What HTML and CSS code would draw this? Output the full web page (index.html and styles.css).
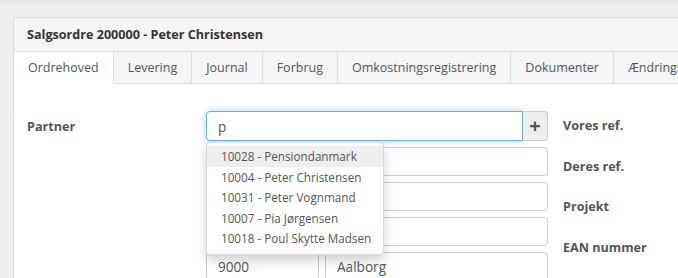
FILE: index.html
```html
<!DOCTYPE html>
<html lang="da">
	<head>
		<meta charset="UTF-8" />
		<meta name="viewport" content="width=device-width, initial-scale=1.0" />
		<link rel="stylesheet" href="styles.css">
		<title>Salgsordre 200000</title>
	</head>
	<body>
		<div class="page">
			<div class="panel">
				<div class="panel-heading">Salgsordre 200000 - Peter Christensen</div>

				<ul class="tabs">
					<li class="tab active">Ordrehoved</li>
					<li class="tab">Levering</li>
					<li class="tab">Journal</li>
					<li class="tab">Forbrug</li>
					<li class="tab">Omkostningsregistrering</li>
					<li class="tab">Dokumenter</li>
					<li class="tab">Ændringslog</li>
				</ul>

				<div class="panel-body">
					<div class="col-label">
						<label class="label">Partner</label>
					</div>

					<div class="col-fields">
						<div class="input-group">
							<input class="input focus" type="text" value="p" />
							<span class="addon">+</span>
						</div>
						<input class="input" type="text" />
						<input class="input" type="text" />
						<input class="input" type="text" />
						<div class="split">
							<input class="input zip" type="text" value="9000" />
							<input class="input" type="text" value="Aalborg" />
						</div>

						<!-- autocomplete list for the partner field -->
						<ul class="dropdown">
							<li class="item hover">10028 - Pensiondanmark</li>
							<li class="item">10004 - Peter Christensen</li>
							<li class="item">10031 - Peter Vognmand</li>
							<li class="item">10007 - Pia Jørgensen</li>
							<li class="item">10018 - Poul Skytte Madsen</li>
						</ul>
					</div>

					<div class="col-right">
						<label class="label">Vores ref.</label>
						<label class="label">Deres ref.</label>
						<label class="label">Projekt</label>
						<label class="label">EAN nummer</label>
					</div>
				</div>
			</div>
		</div>
	</body>
</html>
```

FILE: styles.css
```css
* {
	padding: 0;
	margin: 0;
	box-sizing: border-box;
	font-family: 'Open Sans', Arial, sans-serif;
}

body {
	background: linear-gradient(#e6e6e6, #efefef 5px, #efefef);
	color: #555;
	overflow: hidden;
}

.page {
	padding: 17px 0 0 13px;
}

.panel {
	width: 720px;
	background-color: #fff;
	border: 1px solid #ddd;
}

.panel-heading {
	height: 34px;
	padding: 0 13px;
	line-height: 33px;
	font-size: 12.6px;
	font-weight: bold;
	color: #333;
	background-color: #f5f5f5;
	border-bottom: 1px solid #ddd;
}

.tabs {
	display: flex;
	list-style: none;
	height: 32px;
	background-color: #f5f5f5;
	border-bottom: 1px solid #ddd;
}

.tab {
	padding: 0 14px;
	line-height: 31px;
	font-size: 12.5px;
	color: #555;
	border-right: 1px solid #ddd;
	white-space: nowrap;
}

.tab.active {
	background-color: #fff;
	height: 32px;
}

.panel-body {
	display: flex;
	padding: 27px 0 0 13px;
	height: 200px;
}

.label {
	display: block;
	font-size: 12.6px;
	font-weight: bold;
	color: #555;
}

.col-label {
	width: 179px;
	padding-top: 7px;
}

.col-fields {
	position: relative;
	width: 342px;
	display: flex;
	flex-direction: column;
	gap: 6px;
}

.input {
	display: block;
	width: 100%;
	height: 29px;
	padding: 0 11px;
	font-size: 13.6px;
	color: #555;
	border: 1px solid #ccc;
	border-radius: 4px;
	outline: none;
}

.input-group {
	display: flex;
	height: 30px;
}

.input-group .input {
	height: 30px;
	border-radius: 4px 0 0 4px;
}

.input.focus {
	border-color: #66afe9;
	box-shadow: 0 0 6px rgba(102, 175, 233, 0.6);
}

.addon {
	width: 25px;
	flex-shrink: 0;
	text-align: center;
	line-height: 27px;
	font-size: 20px;
	font-weight: bold;
	color: #555;
	background-color: #eee;
	border: 1px solid #ccc;
	border-left: none;
	border-radius: 0 4px 4px 0;
}

.split {
	display: flex;
	gap: 6px;
}

.split .zip {
	width: 113px;
	flex-shrink: 0;
}

.dropdown {
	position: absolute;
	top: 31px;
	left: 0;
	width: 178px;
	list-style: none;
	padding: 3px 0 5px;
	background-color: #fff;
	border: 1px solid rgba(0, 0, 0, 0.15);
	border-radius: 4px;
	box-shadow: 0 6px 12px rgba(0, 0, 0, 0.175);
}

.item {
	padding: 0 14px;
	line-height: 20.5px;
	font-size: 11.7px;
	color: #555;
	white-space: nowrap;
}

.item.hover {
	background-color: #eee;
}

.col-right {
	padding: 6px 0 0 15px;
	display: flex;
	flex-direction: column;
	gap: 23.5px;
}
```
